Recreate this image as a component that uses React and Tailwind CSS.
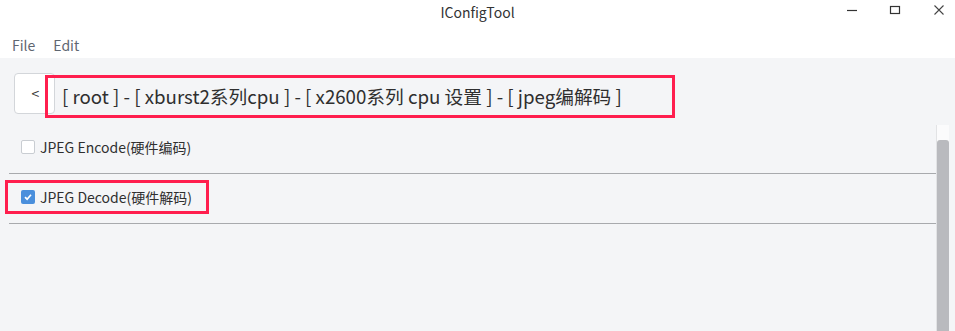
const FONT = { fontFamily: '"Noto Sans CJK SC", "Noto Sans", sans-serif' }

function WindowControls() {
  return (
    <div className="flex items-start pt-[4px] h-full">
      <svg width="12" height="12" viewBox="0 0 12 12" className="mr-[31px]">
        <path d="M1 6.5H11" stroke="#333" strokeWidth="1.2" />
      </svg>
      <svg width="12" height="12" viewBox="0 0 12 12" className="mr-[32px]">
        <rect x="1.5" y="2.5" width="9" height="7" fill="none" stroke="#333" strokeWidth="1.2" />
      </svg>
      <svg width="12" height="12" viewBox="0 0 12 12" className="mr-[10px]">
        <path d="M1.5 1.5L10.5 10.5M10.5 1.5L1.5 10.5" stroke="#444" strokeWidth="1.1" />
      </svg>
    </div>
  )
}

function Checkbox({ checked }) {
  if (checked) {
    return (
      <span className="w-[14px] h-[14px] rounded-[2px] bg-[#4a8fdc] flex items-center justify-center shrink-0">
        <svg width="10" height="10" viewBox="0 0 10 10">
          <path d="M2 5.2L4.1 7.2L8 2.8" fill="none" stroke="#fff" strokeWidth="1.7" />
        </svg>
      </span>
    )
  }
  return <span className="w-[14px] h-[14px] rounded-[2px] bg-white border border-[#c9cdd2] shrink-0" />
}

function OptionRow({ label, checked, marked }) {
  return (
    <div className="h-[50px] flex items-start pt-[6px] ml-[9px] border-b border-[#a8aaad]">
      <div
        className={`ml-[-4px] h-[34px] flex items-center gap-[5px] pl-[13px] pr-[14px] border-[3px] ${
          marked ? 'border-[#ff1f4e]' : 'border-transparent'
        }`}
      >
        <Checkbox checked={checked} />
        <span className="text-[14px] text-[#2f2f2f] leading-none">{label}</span>
      </div>
    </div>
  )
}

export default function App() {
  return (
    <div className="w-[955px] h-[331px] bg-[#f4f5f7] flex flex-col overflow-hidden" style={FONT}>
      {/* Title bar */}
      <div className="h-[26px] bg-white flex items-center pb-[3px] relative">
        <div className="flex-1 text-center text-[14px] text-[#333] leading-none">IConfigTool</div>
        <div className="absolute right-0 top-0 h-full">
          <WindowControls />
        </div>
      </div>

      {/* Menu */}
      <div className="h-[32px] bg-white flex items-center gap-[18px] pl-[12px] pt-[6px] text-[14px] text-[#5f6671]">
        <span>File</span>
        <span>Edit</span>
      </div>

      {/* Path bar */}
      <div className="flex items-start pl-[14px] pt-[15px] h-[66px]">
        <button className="w-[41px] h-[41px] bg-white border border-[#d3d6da] rounded-[4px] text-[14px] text-[#333] pl-[2px]">
          &lt;
        </button>
        <div className="ml-[-10px] mt-[2px] w-[630px] h-[43px] border-[3px] border-[#ff1f4e] flex items-center pl-[14px] text-[18.7px] text-[#2f2f2f] whitespace-nowrap">
          [ root ] - [ xburst2系列cpu ] - [ x2600系列 cpu 设置 ] - [ jpeg编解码 ]
        </div>
      </div>

      {/* Options + scrollbar */}
      <div className="flex-1 flex">
        <div className="flex-1 flex flex-col">
          <OptionRow label="JPEG Encode(硬件编码)" />
          <OptionRow label="JPEG Decode(硬件解码)" checked marked />
        </div>
        <div className="w-[13px] mt-[1px] bg-[#fbfbfc] border-l border-[#e2e3e5] flex justify-center pt-[15px]">
          <div className="w-[6px] flex-1 bg-[#b9babe] rounded-t-[3px]" />
        </div>
        <div className="w-[6px]" />
      </div>
    </div>
  )
}
